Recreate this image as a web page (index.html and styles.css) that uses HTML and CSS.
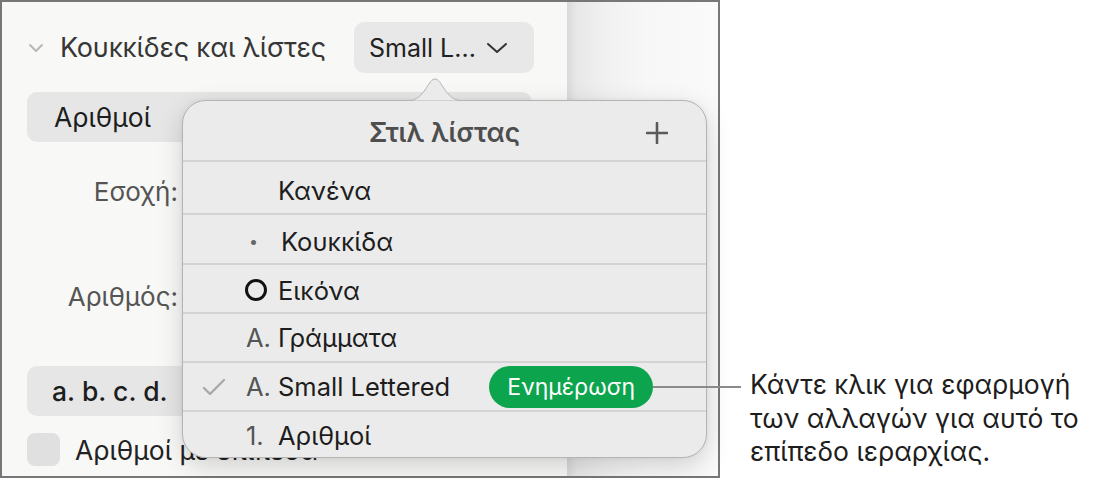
FILE: index.html
```html
<!DOCTYPE html>
<html lang="el">
<head>
  <meta charset="UTF-8" />
  <title>Στιλ λίστας</title>
  <link rel="stylesheet" href="styles.css">
</head>
<body>

<div class="shot">
  <div class="frame">
    <div class="inspector">
      <div class="section-head">
        <svg class="disclosure" width="16" height="10" viewBox="0 0 16 10"><path d="M2 2 L8 8 L14 2" fill="none" stroke="#b8b8b8" stroke-width="2" stroke-linecap="round" stroke-linejoin="round"/></svg>
        <span class="section-title">Κουκκίδες και λίστες</span>
        <div class="popup-btn">
          <span>Small L...</span>
          <svg width="22" height="14" viewBox="0 0 22 14"><path d="M2 3 L11 11 L20 3" fill="none" stroke="#333" stroke-width="2" stroke-linecap="round" stroke-linejoin="round"/></svg>
        </div>
      </div>

      <div class="field">Αριθμοί</div>

      <div class="label-row"><span class="label">Εσοχή:</span></div>
      <div class="label-row second"><span class="label">Αριθμός:</span></div>

      <div class="field format">a. b. c. d.</div>

      <div class="check-row">
        <span class="checkbox"></span>
        <span>Αριθμοί με επίπεδα</span>
      </div>
    </div>
    <div class="canvas"></div>

    <div class="popover">
      <svg class="arrow" width="60" height="24" viewBox="0 0 60 24">
        <path d="M0 23 C10 23 14 20 20 12 C25 4 27 1 30 1 C33 1 35 4 40 12 C46 20 50 23 60 23 Z" fill="#ebebeb" stroke="#b4b4b4" stroke-width="1"/>
        <rect x="0" y="23" width="60" height="2" fill="#ebebeb"/>
      </svg>
      <div class="pop-head">
        <span class="pop-title">Στιλ λίστας</span>
        <svg class="plus" width="22" height="22" viewBox="0 0 22 22"><path d="M11 1 V21 M1 11 H21" stroke="#5a5a5a" stroke-width="2.6" stroke-linecap="round"/></svg>
      </div>
      <ul class="styles">
        <li><span class="tick"></span><span class="mark"></span><span class="name">Κανένα</span></li>
        <li><span class="tick"></span><span class="mark bullet">•</span><span class="name">Κουκκίδα</span></li>
        <li><span class="tick"></span><span class="mark"><span class="ring"></span></span><span class="name">Εικόνα</span></li>
        <li><span class="tick"></span><span class="mark">A.</span><span class="name">Γράμματα</span></li>
        <li class="current">
          <span class="tick"><svg width="24" height="18" viewBox="0 0 24 18"><path d="M2 10 L8 16 L22 2" fill="none" stroke="#a9a9a9" stroke-width="2.4" stroke-linecap="round" stroke-linejoin="round"/></svg></span>
          <span class="mark">A.</span><span class="name">Small Lettered</span>
          <span class="update">Ενημέρωση</span>
        </li>
        <li><span class="tick"></span><span class="mark">1.</span><span class="name">Αριθμοί</span></li>
      </ul>
    </div>
  </div>

  <p class="callout">Κάντε κλικ για εφαρμογή<br>των αλλαγών για αυτό το<br>επίπεδο ιεραρχίας.</p>
</div>

</body>
</html>
```

FILE: styles.css
```css
body {
  margin: 0;
  background: #fff;
  font-family: 'Inter', 'Noto Sans', sans-serif;
  color: #1d1d1d;
}

.shot {
  display: flex;
  align-items: flex-start;
}

.frame {
  position: relative;
  display: flex;
  width: 720px;
  height: 478px;
  box-sizing: border-box;
  border: 2px solid #777;
  flex-shrink: 0;
}

.inspector {
  width: 565px;
  background: #f8f8f7;
  padding-left: 25px;
  box-sizing: border-box;
  display: flex;
  flex-direction: column;
  overflow: hidden;
}

.section-head {
  display: flex;
  align-items: center;
  height: 51px;
  margin-top: 20px;
}

.disclosure {
  margin-left: 1px;
  margin-right: 16px;
}

.section-title {
  font-size: 27px;
  color: #363636;
  letter-spacing: -0.2px;
}

.popup-btn {
  margin-left: auto;
  margin-right: 33px;
  width: 180px;
  height: 51px;
  box-sizing: border-box;
  background: #e8e8e8;
  border-radius: 10px;
  display: flex;
  align-items: center;
  padding-left: 15px;
  gap: 10px;
  font-size: 25px;
  color: #222;
}

.field {
  margin-top: 19px;
  width: 505px;
  height: 50px;
  box-sizing: border-box;
  background: #e6e6e6;
  border-radius: 10px;
  display: flex;
  align-items: center;
  padding-left: 27px;
  font-size: 26.5px;
  color: #1d1d1d;
}

.label-row {
  height: 50px;
  margin-top: 24px;
  width: 151px;
  display: flex;
  align-items: center;
  justify-content: flex-end;
}

.label-row.second {
  margin-top: 55px;
}

.label {
  font-size: 26px;
  color: #555;
}

.field.format {
  margin-top: 45px;
  padding-left: 25px;
  font-weight: 500;
}

.check-row {
  margin-top: 17px;
  display: flex;
  align-items: center;
  gap: 15px;
  font-size: 26.5px;
  color: #222;
}

.checkbox {
  width: 33px;
  height: 33px;
  background: #e0e0e0;
  border-radius: 8px;
  flex-shrink: 0;
}

.canvas {
  flex: 1;
  background: linear-gradient(90deg, #d9d9d9 0, #e8e8e8 10px, #f1f1f1 40px, #f7f7f7 80px, #fafafa 100%);
}

.popover {
  position: absolute;
  left: 180px;
  top: 98px;
  width: 525px;
  height: 358px;
  box-sizing: border-box;
  background: #ebebeb;
  border: 1px solid #b4b4b4;
  border-radius: 24px;
  box-shadow: 0 8px 26px rgba(0, 0, 0, 0.16), 0 0 4px rgba(0, 0, 0, 0.06);
}

.arrow {
  position: absolute;
  left: 222px;
  top: -23px;
}

.pop-head {
  height: 61px;
  display: flex;
  align-items: center;
  justify-content: center;
  position: relative;
  border-bottom: 2px solid #d3d3d3;
  box-sizing: border-box;
}

.pop-title {
  font-size: 26.5px;
  font-weight: 600;
  color: #4e4e4e;
  margin-top: 2px;
}

.plus {
  position: absolute;
  right: 38px;
  top: 21px;
}

.styles {
  list-style: none;
  margin: 0;
  padding: 0;
}

.styles li {
  height: 49px;
  box-sizing: border-box;
  display: flex;
  align-items: center;
  padding-left: 19px;
  font-size: 25.5px;
  color: #1d1d1d;
}

.styles li:nth-child(1) {
  height: 51px;
  padding-top: 5px;
}

.styles li:nth-child(2) {
  height: 50px;
  padding-top: 4px;
}

.styles li:nth-child(3) {
  padding-top: 3px;
}

.styles li + li {
  border-top: 2px solid #d3d3d3;
}

.tick {
  width: 44px;
  display: flex;
  align-items: center;
}

.mark {
  width: 32px;
  color: #555;
  display: flex;
  align-items: center;
}

.bullet {
  font-size: 16px;
  padding-left: 3px;
  color: #666;
}

.ring {
  width: 16px;
  height: 16px;
  margin-left: -1px;
  border: 3.5px solid #111;
  border-radius: 50%;
}

.update {
  position: relative;
  margin-left: 39px;
  width: 164px;
  height: 42px;
  border-radius: 21px;
  background: #0ca44c;
  color: #fff;
  font-size: 23px;
  display: flex;
  align-items: center;
  justify-content: center;
}

.update::after {
  content: "";
  position: absolute;
  left: 164px;
  top: 20px;
  width: 88px;
  height: 2px;
  background: #8a8a8a;
}

.callout {
  margin: 368px 0 0 30px;
  font-size: 26.5px;
  line-height: 33.5px;
  color: #1d1d1d;
}
```
